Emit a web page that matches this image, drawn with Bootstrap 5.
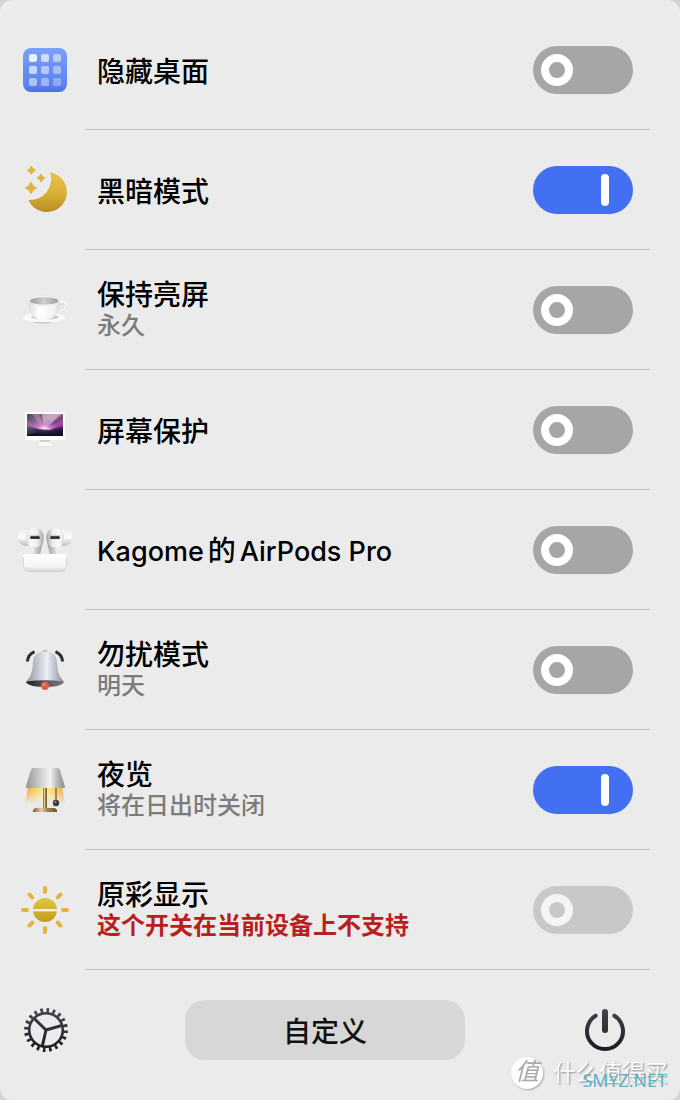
<!DOCTYPE html>
<html lang="zh-CN">
<head>
<meta charset="utf-8">
<meta name="viewport" content="width=device-width, initial-scale=1">
<title>One Switch</title>
<link href="https://cdn.jsdelivr.net/npm/bootstrap@5.3.0/dist/css/bootstrap.min.css" rel="stylesheet">
<style>
  body { font-family: Inter, "Noto Sans CJK SC", sans-serif; background: #d4d4d4; color: #000; }
  .panel { background: #ebebeb; border-radius: 12px; padding-top: 10px; min-height: 100vh; }
  .switch-row { padding-left: 15px; padding-right: 30px; }
  .row-icon { width: 60px; height: 60px; margin-right: 10px; }
  .row-body { min-height: 120px; border-bottom: 1px solid #c0c0c0; padding: 0 17px 0 12px; }
  .row-title { font-size: 28px; line-height: 36px; font-weight: 500; }
  .row-latin { font-size: 27px; }
  .row-han { margin: 0 4px; }
  .row-note { font-size: 24px; line-height: 26px; font-weight: 500; color: #7b7b7b; }
  .row-note.unsupported { color: #b91f1d; font-weight: 700; }
  .toggle { appearance: none; width: 100px; height: 48px; margin: 0; padding: 8px; border-radius: 24px; background: #a6a6a6; cursor: pointer; }
  .toggle::before { content: ""; display: block; box-sizing: border-box; width: 32px; height: 32px; border: 8px solid #fff; border-radius: 50%; }
  .toggle:checked { background: #4370f3; }
  .toggle:checked::before { width: 8px; margin-left: 60px; border-width: 4px; border-radius: 4px; background: #fff; }
  .toggle:disabled { background: #c8c8c8; }
  .toggle:disabled::before { border-color: #f5f5f5; }
  .panel-footer { padding: 30px 45px 40px 15px; }
  .icon-btn { width: 60px; height: 60px; }
  .customize { width: 280px; height: 60px; border-radius: 20px; background: #d7d7d7; color: #111; font-size: 28px; line-height: 36px; font-weight: 500; }
  .mark-zdm { right: 12px; bottom: 9px; gap: 10px; font-size: 23px; line-height: 36px; color: #fff; text-shadow: 1px 1px 2px #888; }
  .mark-seal { width: 32px; height: 32px; line-height: 30px; border-radius: 50%; background: #fff; color: #aaa; font-size: 24px; font-style: italic; text-shadow: none; box-shadow: 1px 1px 2px #aaa; }
  .mark-site { right: 13px; bottom: 8px; font: 18px/24px "Open Sans", sans-serif; color: #55b0c8; }
</style>
</head>
<body>
<svg width="0" height="0" class="position-absolute" aria-hidden="true">
  <defs>
    <linearGradient id="gBlue" x1="0" y1="0" x2="0" y2="1"><stop offset="0" stop-color="#7da0fa"/><stop offset=".85" stop-color="#5b82f0"/><stop offset="1" stop-color="#4a70e4"/></linearGradient>
    <linearGradient id="gMoon" x1="0" y1="0" x2="0" y2="1"><stop offset="0" stop-color="#e9c349"/><stop offset=".5" stop-color="#d9b138"/><stop offset="1" stop-color="#b98d22"/></linearGradient>
    <linearGradient id="gCup" x1="0" x2="1"><stop offset="0" stop-color="#dcdcdc"/><stop offset=".35" stop-color="#fff"/><stop offset=".8" stop-color="#f2f2f2"/><stop offset="1" stop-color="#d5d5d5"/></linearGradient>
    <linearGradient id="gCupIn" x1="0" x2="1"><stop offset="0" stop-color="#9a9a9a"/><stop offset=".5" stop-color="#cfcfcf"/><stop offset="1" stop-color="#9c9c9c"/></linearGradient>
    <linearGradient id="gScreen" x1="0" y1="0" x2="1" y2="1"><stop offset="0" stop-color="#4c4256"/><stop offset=".4" stop-color="#a878a6"/><stop offset=".7" stop-color="#7a3c86"/><stop offset="1" stop-color="#2a1236"/></linearGradient>
    <radialGradient id="gFlare" cx=".48" cy=".68" r=".42"><stop offset="0" stop-color="#fff"/><stop offset=".35" stop-color="#ea9be4" stop-opacity=".8"/><stop offset="1" stop-color="#c04ec0" stop-opacity="0"/></radialGradient>
    <linearGradient id="gHills" x1="0" y1="0" x2="0" y2="1"><stop offset="0" stop-color="#16122c" stop-opacity="0"/><stop offset=".5" stop-color="#16122c" stop-opacity=".8"/><stop offset="1" stop-color="#0c0a1c"/></linearGradient>
    <linearGradient id="gPod" x1="0" x2="1"><stop offset="0" stop-color="#dedede"/><stop offset=".3" stop-color="#fafafa"/><stop offset=".65" stop-color="#ececec"/><stop offset="1" stop-color="#a2a2a2"/></linearGradient>
    <linearGradient id="gCase" x1="0" y1="0" x2="0" y2="1"><stop offset="0" stop-color="#fff"/><stop offset=".7" stop-color="#f5f5f5"/><stop offset="1" stop-color="#cfcfcf"/></linearGradient>
    <linearGradient id="gTip" x1="0" y1="0" x2="0" y2="1"><stop offset="0" stop-color="#f0f0f0"/><stop offset=".5" stop-color="#fafafa"/><stop offset="1" stop-color="#bdbdbd"/></linearGradient>
    <linearGradient id="gStem" x1="0" x2="1"><stop offset="0" stop-color="#e0e0e0"/><stop offset="1" stop-color="#9d9d9d"/></linearGradient>
    <linearGradient id="gBell" x1="0" x2="1"><stop offset="0" stop-color="#8e939b"/><stop offset=".3" stop-color="#c0c5ce"/><stop offset=".55" stop-color="#eceff4"/><stop offset=".8" stop-color="#b3b8c3"/><stop offset="1" stop-color="#858a94"/></linearGradient>
    <linearGradient id="gBellIn" x1="0" x2="1"><stop offset="0" stop-color="#222"/><stop offset=".5" stop-color="#555"/><stop offset="1" stop-color="#777"/></linearGradient>
    <linearGradient id="gShade" x1="0" x2="1"><stop offset="0" stop-color="#949494"/><stop offset=".3" stop-color="#c4c4c2"/><stop offset=".62" stop-color="#f3f3f1"/><stop offset=".8" stop-color="#b9b9b7"/><stop offset="1" stop-color="#8c8c8c"/></linearGradient>
    <linearGradient id="gGlow" x1="0" x2="1"><stop offset="0" stop-color="#f2a34e"/><stop offset=".25" stop-color="#fbd35f"/><stop offset=".5" stop-color="#fff0a0"/><stop offset=".75" stop-color="#fbd35f"/><stop offset="1" stop-color="#f2a34e"/></linearGradient>
    <linearGradient id="gFade" x1="0" y1="0" x2="0" y2="1"><stop offset=".2" stop-color="#fff"/><stop offset="1" stop-color="#000"/></linearGradient>
    <mask id="mGlow"><rect x="8" y="27" width="44" height="17" fill="url(#gFade)"/></mask>
    <linearGradient id="gBrass" x1="0" x2="1"><stop offset="0" stop-color="#7b5e30"/><stop offset=".35" stop-color="#e4cf9b"/><stop offset=".6" stop-color="#a2824a"/><stop offset="1" stop-color="#6f542a"/></linearGradient>
    <linearGradient id="gSun" x1="0" y1="0" x2="0" y2="1"><stop offset="0" stop-color="#dfc93a"/><stop offset="1" stop-color="#c29a22"/></linearGradient>
    <linearGradient id="gInk" gradientUnits="userSpaceOnUse" x1="0" y1="8" x2="0" y2="52"><stop offset="0" stop-color="#45454f"/><stop offset="1" stop-color="#19191f"/></linearGradient>
    <clipPath id="cScreen"><rect x="12" y="14" width="36" height="22"/></clipPath>
  </defs>
</svg>

<main class="panel position-relative">
  <ul class="list-unstyled mb-0">
    <li class="switch-row d-flex align-items-center">
      <svg class="row-icon flex-shrink-0" viewBox="0 0 60 60" aria-hidden="true">
        <rect x="8" y="8" width="44" height="44" rx="8" fill="url(#gBlue)"/>
        <g fill="#fff">
          <rect x="14" y="14" width="8" height="8" rx="2" opacity=".85"/><rect x="26" y="14" width="8" height="8" rx="2" opacity=".65"/><rect x="38" y="14" width="8" height="8" rx="2" opacity=".5"/>
          <rect x="14" y="26" width="8" height="8" rx="2" opacity=".65"/><rect x="26" y="26" width="8" height="8" rx="2" opacity=".52"/><rect x="38" y="26" width="8" height="8" rx="2" opacity=".42"/>
          <rect x="14" y="38" width="8" height="8" rx="2" opacity=".5"/><rect x="26" y="38" width="8" height="8" rx="2" opacity=".4"/><rect x="38" y="38" width="8" height="8" rx="2" opacity=".3"/>
        </g>
      </svg>
      <div class="row-body flex-grow-1 d-flex align-items-center justify-content-between">
        <label class="row-title pt-1" for="sw1">隐藏桌面</label>
        <input class="toggle flex-shrink-0" type="checkbox" role="switch" id="sw1">
      </div>
    </li>
    <li class="switch-row d-flex align-items-center">
      <svg class="row-icon flex-shrink-0" viewBox="0 0 60 60" aria-hidden="true">
        <path fill="url(#gMoon)" d="M35 12.3A20 20 0 1 1 13.5 40A21 21 0 0 0 35 12.3Z"/>
        <g fill="#deb43c" stroke="#deb43c" stroke-linejoin="round">
          <path d="M16.3 6.3Q17.3 9.3 20.3 10.3Q17.3 11.3 16.3 14.3Q15.3 11.3 12.3 10.3Q15.3 9.3 16.3 6.3Z"/>
          <path d="M26 14Q27 17 30 18Q27 19 26 22Q25 19 22 18Q25 17 26 14Z"/>
          <path d="M16 22.5Q17.400 26.600 21.500 28Q17.400 29.400 16 33.500Q14.600 29.400 10.500 28Q14.600 26.600 16 22.500Z" stroke-width="1.300"/>
        </g>
      </svg>
      <div class="row-body flex-grow-1 d-flex align-items-center justify-content-between">
        <label class="row-title pt-1" for="sw2">黑暗模式</label>
        <input class="toggle flex-shrink-0" type="checkbox" role="switch" id="sw2" checked>
      </div>
    </li>
    <li class="switch-row d-flex align-items-center">
      <svg class="row-icon flex-shrink-0" viewBox="0 0 60 60" aria-hidden="true">
        <ellipse cx="28" cy="40" rx="12" ry="3.500" fill="#bdbdbd"/>
        <ellipse cx="29" cy="37.500" rx="21" ry="4.800" fill="#fbfbfb"/>
        <ellipse cx="30" cy="37" rx="14" ry="2.800" fill="#cfcfcf"/>
        <path d="M44 23Q51 20 51 25Q50 30 41 31" fill="none" stroke="#f4f4f4" stroke-width="2.200"/>
        <path d="M45 24.500Q49.500 22.500 49.300 25.500Q48.500 28.500 43 29.500" fill="none" stroke="#cdcdcd" stroke-width=".7"/>
        <path d="M12.700 20.500C13 30 16 36 22 39Q28.500 41 35 39C41 36 45 30 45.600 20.500Z" fill="url(#gCup)"/>
        <ellipse cx="29.200" cy="20.500" rx="16.500" ry="5" fill="#f3f3f3" stroke="#ddd" stroke-width=".5"/>
        <ellipse cx="29.200" cy="20.900" rx="14.300" ry="3.700" fill="url(#gCupIn)"/>
      </svg>
      <div class="row-body flex-grow-1 d-flex align-items-center justify-content-between">
        <label class="d-flex flex-column pb-1" for="sw3"><span class="row-title">保持亮屏</span><span class="row-note">永久</span></label>
        <input class="toggle flex-shrink-0" type="checkbox" role="switch" id="sw3">
      </div>
    </li>
    <li class="switch-row d-flex align-items-center">
      <svg class="row-icon flex-shrink-0" viewBox="0 0 60 60" aria-hidden="true">
        <path d="M25 40h10l.7 5H24.300Z" fill="#f8f8f8"/><path d="M25 40h10v2H25Z" fill="#cfcfcf"/>
        <path d="M23 45h14l.500 1.700h-15Z" fill="#fdfdfd"/><path d="M22.500 46.300h15v.8h-15Z" fill="#d0d0d0"/>
        <rect x="10" y="12" width="40" height="28" rx="1" fill="#fdfdfd"/>
        <g clip-path="url(#cScreen)">
          <rect x="12" y="14" width="36" height="22" fill="url(#gScreen)"/>
          <path d="M29 30L17 14H24Z" fill="#b7a2bd" opacity=".45"/>
          <path d="M29 30L27 14H46Z" fill="#dcc8d8" opacity=".6"/>
          <path d="M29 30L48 14V19Z" fill="#6d4767" opacity=".7"/>
          <path d="M29 30L48 20V27Z" fill="#c94fc0" opacity=".5"/>
          <path d="M29 30L12 21V26Z" fill="#b46cc4" opacity=".5"/>
          <rect x="12" y="14" width="36" height="22" fill="url(#gFlare)"/>
          <path d="M12 25L24 29L35 30L48 25V36H12Z" fill="url(#gHills)"/>
          <path d="M12 27L22 32L12 35Z" fill="#2c6470" opacity=".5"/>
        </g>
      </svg>
      <div class="row-body flex-grow-1 d-flex align-items-center justify-content-between">
        <label class="row-title pt-1" for="sw4">屏幕保护</label>
        <input class="toggle flex-shrink-0" type="checkbox" role="switch" id="sw4">
      </div>
    </li>
    <li class="switch-row d-flex align-items-center">
      <svg class="row-icon flex-shrink-0" viewBox="0 0 60 60" aria-hidden="true">
        <g id="pod">
          <path d="M18 25Q20 27 20 30L18 35H25L28 22Z" fill="url(#gStem)"/>
          <path d="M13 9.500Q3 9 3 14V19Q3 25.500 13 26Z" fill="url(#gTip)"/>
          <path d="M20 8C26 8 29 12 28.600 19C28.300 24 25 27.500 20 27.300C14 27 11 23 11 18C11 12 14.500 8 20 8Z" fill="url(#gPod)"/>
          <rect x="15" y="16" width="10" height="3" rx="1.500" fill="#333"/>
          <path d="M15 15.700h10" stroke="#bbb" stroke-width=".8"/>
        </g>
        <use href="#pod" transform="matrix(-1 0 0 1 60 0)"/>
        <path d="M11 34H49Q52 34 52 37V45Q52 52 45 52H15Q8 52 8 45V37Q8 34 11 34Z" fill="url(#gCase)"/>
        <path d="M8.500 37V45Q9 51.500 15 51.500H45Q51 51.500 51.500 45V37" fill="none" stroke="#cfcfcf" stroke-width=".8"/>
      </svg>
      <div class="row-body flex-grow-1 d-flex align-items-center justify-content-between">
        <label class="row-title pt-1" for="sw5"><span class="row-latin">Kagome</span><span class="row-han">的</span><span class="row-latin">AirPods Pro</span></label>
        <input class="toggle flex-shrink-0" type="checkbox" role="switch" id="sw5">
      </div>
    </li>
    <li class="switch-row d-flex align-items-center">
      <svg class="row-icon flex-shrink-0" viewBox="0 0 60 60" aria-hidden="true">
        <path d="M12.500 21.500Q13 14.500 19.500 11.700M47.500 21.500Q47 14.500 40.500 11.700" fill="none" stroke="#2d2e30" stroke-width="3"/>
        <rect x="27.500" y="10" width="5" height="4" rx="1.500" fill="#aeb3bb"/>
        <path d="M11 42.500Q12 40 15 39H45Q48 40 49 42.500Q45 47 30 47Q15 47 11 42.500Z" fill="url(#gBellIn)"/>
        <path d="M30 11.500C38 11.500 41.500 16 42 22C42.500 31 43.500 36 49 41.500Q30 39 11 41.500C16.500 36 17.500 31 18 22C18.500 16 22 11.500 30 11.500Z" fill="url(#gBell)"/>
        <circle cx="30" cy="45.800" r="4.200" fill="#d65f50"/><circle cx="29" cy="44.500" r="1.500" fill="#e98a7c"/>
      </svg>
      <div class="row-body flex-grow-1 d-flex align-items-center justify-content-between">
        <label class="d-flex flex-column pb-1" for="sw6"><span class="row-title">勿扰模式</span><span class="row-note">明天</span></label>
        <input class="toggle flex-shrink-0" type="checkbox" role="switch" id="sw6">
      </div>
    </li>
    <li class="switch-row d-flex align-items-center">
      <svg class="row-icon flex-shrink-0" viewBox="0 0 60 60" aria-hidden="true">
        <path d="M13 27H47L50 44H10Z" fill="url(#gGlow)" mask="url(#mGlow)"/>
        <rect x="28" y="27" width="4" height="22" fill="url(#gBrass)"/>
        <path d="M20 48H40L42 50V52H18V50Z" fill="url(#gBrass)"/>
        <path d="M41 27V41" stroke="#555" stroke-width="1.200"/>
        <circle cx="41" cy="43" r="3.200" fill="#3c3c40"/><circle cx="40.300" cy="42" r="1" fill="#999"/>
        <path d="M18 8H43Q44.500 8 45 10L50 27Q50 28 49 28H12Q10.500 28 10.800 26.500L16 10Q16.500 8 18 8Z" fill="url(#gShade)"/>
      </svg>
      <div class="row-body flex-grow-1 d-flex align-items-center justify-content-between">
        <label class="d-flex flex-column pb-1" for="sw7"><span class="row-title">夜览</span><span class="row-note">将在日出时关闭</span></label>
        <input class="toggle flex-shrink-0" type="checkbox" role="switch" id="sw7" checked>
      </div>
    </li>
    <li class="switch-row d-flex align-items-center">
      <svg class="row-icon flex-shrink-0" viewBox="0 0 60 60" aria-hidden="true">
        <circle cx="30" cy="30" r="12" fill="url(#gSun)"/>
        <rect x="17" y="29" width="26" height="2.400" fill="#f6f0d4"/>
        <g stroke="#e5b23e" stroke-width="4" stroke-linecap="round">
          <path d="M30 8V12M30 48V52M8 30H12M48 30H52M14.500 14.500L17.300 17.300M42.700 42.700L45.500 45.500M45.500 14.500L42.700 17.300M17.300 42.700L14.500 45.500"/>
        </g>
      </svg>
      <div class="row-body flex-grow-1 d-flex align-items-center justify-content-between">
        <label class="d-flex flex-column pb-1" for="sw8"><span class="row-title">原彩显示</span><span class="row-note unsupported">这个开关在当前设备上不支持</span></label>
        <input class="toggle flex-shrink-0" type="checkbox" role="switch" id="sw8" disabled>
      </div>
    </li>
  </ul>

  <footer class="panel-footer d-flex align-items-center justify-content-between">
    <button type="button" class="icon-btn btn border-0 p-0 d-flex" aria-label="设置">
      <svg width="60" height="60" viewBox="0 0 60 60" fill="none" stroke="url(#gInk)" aria-hidden="true">
        <circle cx="31" cy="30" r="16.800" stroke-width="2.600"/>
        <circle cx="31" cy="30" r="19.700" stroke-width="4.400" pathLength="200" stroke-dasharray="4.200 5.800" transform="rotate(1.500 31 30)"/>
        <path d="M31 30L19.300 18.700M31 30L46.800 25.500M31 30L27.300 46" stroke-width="3"/>
      </svg>
    </button>
    <button type="button" class="customize btn border-0 px-0 pt-1 pb-0">自定义</button>
    <button type="button" class="icon-btn btn border-0 p-0 d-flex" aria-label="退出">
      <svg width="60" height="60" viewBox="0 0 60 60" fill="none" stroke="url(#gInk)" stroke-linecap="round" aria-hidden="true">
        <path d="M20.700 15.700A18 18 0 1 0 39.300 15.700" stroke-width="4"/>
        <rect x="27" y="9" width="6" height="24" rx="3" fill="url(#gInk)" stroke="none"/>
      </svg>
    </button>
  </footer>

  <div class="mark-zdm position-absolute d-flex align-items-center">
    <span class="mark-seal text-center">值</span><span>什么值得买</span>
  </div>
  <span class="mark-site position-absolute">SMYZ.NET</span>
</main>
<script src="https://cdn.jsdelivr.net/npm/bootstrap@5.3.0/dist/js/bootstrap.bundle.min.js"></script>
</body>
</html>
